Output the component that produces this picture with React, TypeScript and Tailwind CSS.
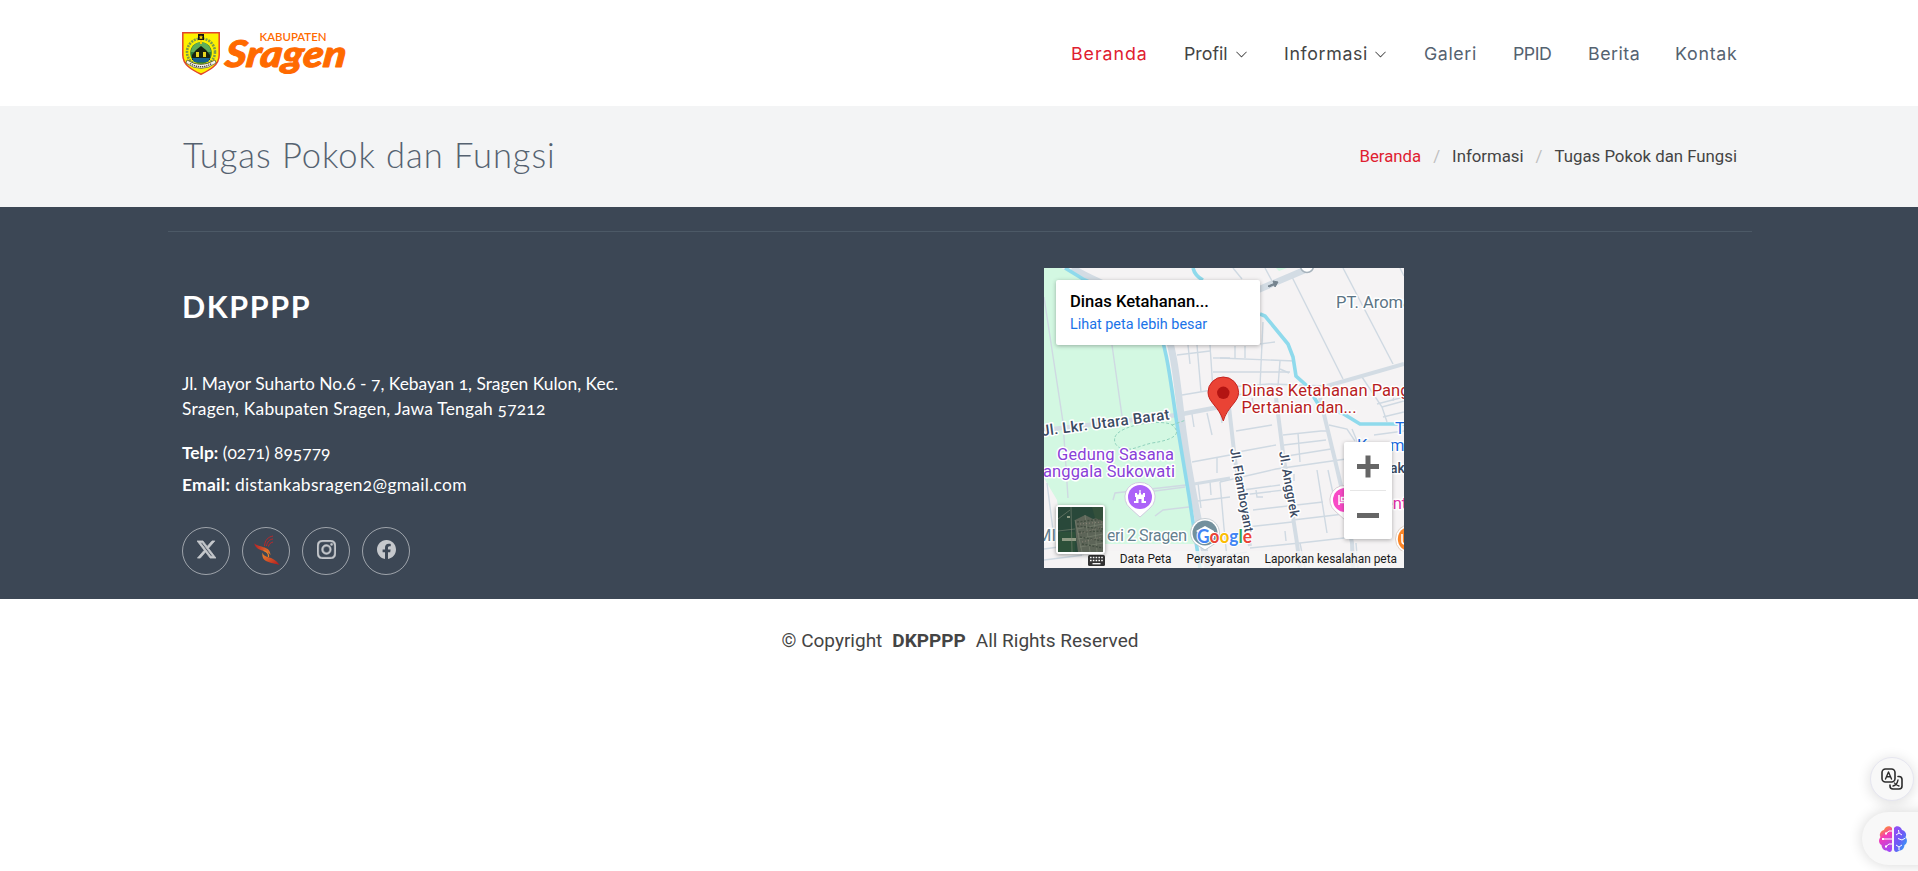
import { BsChevronDown, BsFacebook, BsInstagram, BsTwitterX } from "react-icons/bs";

function Logo() {
  return (
    <svg width="170" height="50" viewBox="0 0 170 50" className="block">
      <path d="M.8 4.8H37.2V27C37.2 37 28 42 19 46.3 10 42 .8 37 .8 27Z" fill="#fdf100" stroke="#e2442b" strokeWidth="1.5" />
      <ellipse cx="19" cy="24" rx="14" ry="13.5" fill="none" stroke="#7c9b4a" strokeWidth="2.6" strokeDasharray="2 1" />
      <circle cx="19" cy="25" r="10.8" fill="#2a7a3c" />
      <path d="M9 24C10 11 28 11 29 24Z" fill="#5fae5a" />
      <path d="M10 27L14 22 19 18 24 22 28 27V32H10Z" fill="#17230f" />
      <path d="M14 24h3v5h-3zM21 24h3v5h-3z" fill="#e6d420" />
      <path d="M10 30H28L26 34H12Z" fill="#14618f" />
      <rect x="16" y="6" width="6" height="6" fill="#151515" />
      <path d="M19 7l.7 1.4 1.5.2-1.1 1 .3 1.6-1.4-.8-1.4.8.3-1.6-1.1-1 1.5-.2zM18 12h2v4h-2z" fill="#fdd000" />
      <path d="M5 32Q19 41 33 32L34 35Q19 46 4 35Z" fill="#f7f7ef" stroke="#34332a" strokeWidth=".6" />
      <path d="M8 35.5Q19 42 30 35.5" fill="none" stroke="#4e4d45" strokeWidth="1.4" strokeDasharray="1.3 .8" />
      <text x="77.500" y="13" fill="#ff6a00" fontFamily="Lato, sans-serif" fontWeight="600" fontSize="11.800" textLength="67" lengthAdjust="spacingAndGlyphs">KABUPATEN</text>
      <text transform="translate(42 39) skewX(-7)" fill="#ff6a00" stroke="#ff6a00" strokeWidth="1" strokeLinejoin="round" fontFamily="Lato, sans-serif" fontStyle="italic" fontWeight="900" fontSize="37" textLength="121" lengthAdjust="spacingAndGlyphs">Sragen</text>
    </svg>
  );
}

const roads = [
  "M216 21L256 4", "M189 0L198 11", "M221 0L228 13", "M248 9L299 111", "M299 0L349 96", "M356 0L360 8",
  "M176 90L251 93", "M169 104H246", "M219 54L216 118", "M191 78V90", "M201 78V90", "M216 76L231 74", "M236 93L234 118",
  "M236 101L245 105", "M318 109L338 139 343 154", "M333 136L360 129", "M339 149L360 144", "M351 121L349 133",
  "M133 87L166 83", "M166 77L169 123", "M153 77L157 124", "M138 127L186 119 225 116 283 118", "M144 77L146 96", "M169 90H186",
  "M148 146L150 159", "M163 145L168 167", "M176 142L178 155", "M148 194L186 187", "M173 190V205", "M154 215L157 240", "M166 213L167 227",
  "M146 234L186 229", "M176 214L232 201 316 189", "M192 163L228 157", "M194 184L232 177", "M199 222L236 217", "M209 242L279 234",
  "M198 227L240 222", "M203 259L248 254", "M249 252L300 246", "M206 280L256 275 300 270", "M239 167L277 163 285 163",
  "M240 177L282 172", "M243 188L287 181", "M254 165L256 194", "M273 202L283 265", "M284 202L290 230", "M250 206V213", "M241 263L242 273",
  "M212 222L213 229 219 229", "M185 128L229 122", "M208 130L210 141",
  "M316 189L345 186", "M308 161L316 180 322 194", "M330 167L360 163", "M285 157L303 161 311 173", "M338 139L360 133",
  "M300 270L326 268", "M312 275L314 300", "M226 300L228 284", "M176 214L180 260 184 300", "M256 275L261 300", "M166 290L203 284",
  "M0 29L19 154 24 230", "M62 40L68 77 78 148", "M0 281L22 278 30 283", "M0 292L40 287", "M3 215L10 270",
  "M69 232L71 225 142 217", "M96 225L141 219", "M111 248L119 242 145 239", "M146 240A5 5 0 0 0 149 244",
];

const halo = {
  stroke: "#fff",
  strokeWidth: 3,
  strokeLinejoin: "round" as const,
  paintOrder: "stroke",
};

function MapCanvas() {
  return (
    <svg width="360" height="300" viewBox="0 0 360 300" className="block" fontFamily="Roboto, sans-serif">
      <rect width="360" height="300" fill="#f5f3f4" />
      <path d="M0 0H17C38 9 86 18 103 40 121 62 128 110 133 142L153 276 20 276 13 232 0 210Z" fill="#d3f8e2" />
      <path d="M232 0H243L235 3Z" fill="#d3f8e2" />
      <g fill="none" stroke="#cfd9e2" strokeWidth="1.4">
        {roads.map((d) => (
          <path key={d} d={d} />
        ))}
      </g>
      <g fill="none" stroke="#d3dce4">
        <path d="M28 0C60 20 105 30 118 52 132 80 134 130 140 170 146 215 155 255 164 300" strokeWidth="7" />
        <path d="M0 162L133 147 186 137" strokeWidth="4.5" />
        <path d="M200 28L216 21 256 4 266 0" strokeWidth="6.5" />
        <path d="M283 118L360 96" strokeWidth="4" />
        <path d="M184 130L191 192 206 278" strokeWidth="4" />
        <path d="M232 130L239 185 253 275 256 300" strokeWidth="4" />
        <path d="M276 130L291 192 298 222 308 275 309 300" strokeWidth="4" />
        <path d="M150 216L186 210" strokeWidth="3" />
      </g>
      <g fill="none" stroke="#8fdaec" strokeWidth="3.6">
        <path d="M21 0L39 11C70 26 100 35 112 55 124 80 127 120 133 156L145 228 156 300" />
        <path d="M216 46L221 48 244 76 249 89 252 108 263 118 276 139 298 145 316 156H360" />
        <path d="M149 0Q151 8 159 12" />
      </g>
      <path d="M71 169C76 156 120 151 128 157 139 166 129 172 108 175 94 178 87 184 76 180Q69 176 71 169ZM128 157L142 152" fill="none" stroke="#90d2bd" strokeDasharray="3 2" />
      <path d="M224 18L230 15.5 229 13 234 14 231 19 230.5 16.8 225 19Z" fill="#75838e" stroke="#75838e" />
      <circle cx="263" cy="-2" r="6.5" fill="#fff" stroke="#a7b3bc" strokeWidth="1.5" />

      <text x="292" y="40" fontSize="16.5" fill="#5b7485" {...halo}>PT. Aroma</text>
      <text x="197.500" y="128" fontSize="16.5" fill="#b81d22" {...halo}><tspan textLength="126">Dinas Ketahanan</tspan> Pangan</text>
      <text x="197.500" y="145" fontSize="16.5" fill="#b81d22" textLength="115" {...halo}>Pertanian dan...</text>
      <text transform="translate(-2 168) rotate(-7.4)" fontSize="15" fontWeight="500" fill="#3b4a62" textLength="129" {...halo}>Jl. Lkr. Utara Barat</text>
      <text transform="translate(186 181) rotate(80)" fontSize="13" fontWeight="500" fill="#3b4a62" textLength="85" {...halo}>Jl. Flamboyant</text>
      <text transform="translate(235 184) rotate(80)" fontSize="13" fontWeight="500" fill="#3b4a62" textLength="67" {...halo}>Jl. Anggrek</text>
      <text x="13" y="192" fontSize="16.5" fill="#8940d8" textLength="117" {...halo}>Gedung Sasana</text>
      <text x="-1" y="209" fontSize="16.5" fill="#8940d8" textLength="132" {...halo}>anggala Sukowati</text>
      <text x="-7" y="273" fontSize="16.5" fill="#647f8e" {...halo}>MI Neg<tspan x="63" textLength="80">eri 2 Sragen</tspan></text>
      <text x="351" y="166" fontSize="16.5" fill="#1a6ae0" {...halo}>T</text>
      <text x="313" y="183" fontSize="16.5" fill="#1a6ae0" {...halo}>K<tspan x="346">me</tspan></text>
      <text x="346" y="205" fontSize="14" fontWeight="500" fill="#3b4a62" {...halo}>aka</text>
      <text x="340" y="241" fontSize="16.5" fill="#e02da8" {...halo}>ent</text>

      <path d="M96 214.500A14.500 14.500 0 0 1 106 240L96 249 86 240A14.500 14.500 0 0 1 96 214.500Z" fill="#fff" stroke="#cabfda" strokeWidth=".8" />
      <circle cx="96" cy="229" r="12" fill="#ac62f8" />
      <path d="M96 222V226" stroke="#fff" strokeWidth="1.300" />
      <path d="M91 225H93V226.500H95V225H97V226.500H99V225H101V229H100V233H102V235H97.500V231H94.500V235H90V233H92V229H91Z" fill="#fff" />

      <path d="M161 250.500A14.500 14.500 0 0 1 171 275.500L161 282 151 275.500A14.500 14.500 0 0 1 161 250.500Z" fill="#fff" stroke="#b9c2c9" strokeWidth=".8" />
      <circle cx="161" cy="265" r="12.500" fill="#73909d" />
      <path d="M152 263L161 258 170 263V270L161 274 155 270V265Z" fill="#fff" />

      <path d="M301 217.500A14.500 14.500 0 0 1 311 243L301 252 291 243A14.500 14.500 0 0 1 301 217.500Z" fill="#fff" stroke="#cfbfc9" strokeWidth=".8" />
      <circle cx="301" cy="232" r="12" fill="#f84ac6" />
      <path d="M295 227V237M295 234.500H307M297.500 229.500H305V232.500H297.500Z" fill="none" stroke="#fff" strokeWidth="1.5" />

      <circle cx="366" cy="271" r="14.500" fill="#fff" stroke="#d5c5b9" strokeWidth=".8" />
      <circle cx="366" cy="271" r="12.200" fill="#fb8527" />
      <path d="M358 266V273Q358 276 361 276" fill="none" stroke="#fff" strokeWidth="1.6" />

      <path d="M179.300 109A15.300 15.300 0 0 1 194.600 124.300C194.600 134.500 183.300 138.500 179.300 153 175.300 138.500 164 134.500 164 124.300A15.300 15.300 0 0 1 179.300 109Z" fill="#ea4335" stroke="#c5221f" strokeWidth="1" />
      <circle cx="179.300" cy="124.800" r="6.200" fill="#b31412" />

      <text x="153" y="274.500" fontSize="18" fontFamily="Lato, sans-serif" fontWeight="700" textLength="55" lengthAdjust="spacingAndGlyphs" {...halo} strokeWidth={2}>
        <tspan fill="#4285f4">G</tspan><tspan fill="#ea4335">o</tspan><tspan fill="#fbbc04">o</tspan><tspan fill="#4285f4">g</tspan><tspan fill="#34a853">l</tspan><tspan fill="#ea4335">e</tspan>
      </text>
    </svg>
  );
}

function Satellite() {
  return (
    <svg width="45" height="45" viewBox="0 0 45 45" className="block">
      <rect width="45" height="45" fill="#29483a" />
      <path d="M17 13L27 8 35 12 45 9V45H20L18 30Z" fill="#5d6558" />
      <path d="M34 0L45 0V14L37 11Z" fill="#34503b" />
      <path d="M0 25H17V45H0Z" fill="#2d5039" />
      <path d="M4 31H18V34H4ZM9 9h3v2H9z" fill="#8f9a83" />
      <path d="M13 0L14 45M0 24L17 22M17 13L24 45M27 8L32 45M36 12L39 45M19 22L45 17M20 32L45 27M0 12L12 3M22 40L45 36" stroke="#7d8676" strokeWidth=".6" fill="none" />
      <path d="M19 15L45 12M19 19L45 22M21 25L45 24M22 30L45 34M24 37L45 41" stroke="#434e41" strokeWidth="1.4" strokeDasharray="2 1.500" fill="none" />
      <path d="M22 17L44 15M20 27L44 20M24 35L44 30" stroke="#8a8376" strokeWidth="1" strokeDasharray="1 2" fill="none" />
    </svg>
  );
}

function MapEmbed() {
  return (
    <div className="relative h-[300px] w-[360px] overflow-hidden font-[Roboto,sans-serif]">
      <MapCanvas />
      <div className="absolute left-3 top-3 h-[65px] w-[204px] rounded-[2px] bg-white pl-[14px] pt-[11px] shadow-[0_1px_4px_rgba(0,0,0,0.3)]">
        <div className="text-[16.6px] font-medium leading-[22px] text-black">Dinas Ketahanan...</div>
        <div className="pt-px text-[14.4px] leading-[21px] text-[#1a73e8]">Lihat peta lebih besar</div>
      </div>
      <div className="absolute bottom-0 right-0 flex h-[17px] w-[322px] items-center justify-end gap-[15px] bg-[#f5f5f5]/75 pr-[7px] pt-px text-[11.9px] text-[#1c1c1c]">
        <svg width="17" height="11" viewBox="0 0 17 11">
          <rect width="17" height="11" rx="1.500" fill="#333" />
          <path d="M2 2.500H15M2 5.500H15" stroke="#fff" strokeWidth="1.500" strokeDasharray="1.600 1.200" />
          <path d="M4.500 8.700H12.500" stroke="#fff" strokeWidth="1.300" />
        </svg>
        <span>Data Peta</span>
        <span>Persyaratan</span>
        <span>Laporkan kesalahan peta</span>
      </div>
      <div className="absolute left-[12px] top-[237px] rounded-[3px] border-2 border-white bg-white shadow-[0_1px_4px_rgba(0,0,0,0.4)]">
        <Satellite />
      </div>
      <div className="absolute left-[300px] top-[174px] flex h-[97px] w-[48px] flex-col items-center rounded-[2px] bg-white shadow-[0_1px_4px_rgba(0,0,0,0.3)]">
        <svg width="48" height="48" viewBox="0 0 48 48"><path d="M13 24.500H35M24 13.500V35.500" stroke="#666" strokeWidth="5" /></svg>
        <div className="h-px w-9 bg-[#e6e6e6]" />
        <svg width="48" height="48" viewBox="0 0 48 48"><path d="M13 24.500H35" stroke="#666" strokeWidth="5" /></svg>
      </div>
    </div>
  );
}

function Bird() {
  return (
    <svg width="27" height="30" viewBox="0 0 27 30">
      <defs>
        <linearGradient id="wing" x1="0" y1="0" x2="1" y2="0">
          <stop offset="0" stopColor="#b51f26" />
          <stop offset="1" stopColor="#e8792b" />
        </linearGradient>
        <linearGradient id="tail" x1="0" y1="0" x2="1" y2="1">
          <stop offset="0" stopColor="#ee8a2d" />
          <stop offset="1" stopColor="#b3161f" />
        </linearGradient>
      </defs>
      <path d="M1 8C5 13 17 10 17.500 20 14 14 4 18 1 8Z" fill="url(#wing)" />
      <path d="M9.500 17.500C11 24 20 20 26.500 30 18 27 8 28 9.500 17.500Z" fill="url(#tail)" />
      <path d="M10.500 15.500Q16 17 15.500 22" fill="none" stroke="#e8842c" strokeWidth="1.200" />
      <path d="M11.500 11C12 5 15 2 20 1M13.500 11C14 7 17 4 20 4M15.500 11.500C16 9 17 8 20 7" stroke="#b9282c" strokeWidth="1" fill="none" />
    </svg>
  );
}

function Brain() {
  return (
    <svg width="30" height="28" viewBox="0 0 30 28">
      <defs>
        <linearGradient id="brainL" x1=".3" y1="0" x2=".6" y2="1">
          <stop offset="0" stopColor="#ff9a1f" />
          <stop offset=".4" stopColor="#f43bb8" />
          <stop offset="1" stopColor="#a347f5" />
        </linearGradient>
        <linearGradient id="brainR" x1="0" y1="0" x2="1" y2="1">
          <stop offset="0" stopColor="#9a4af5" />
          <stop offset=".5" stopColor="#6b5cf6" />
          <stop offset="1" stopColor="#1fb2f5" />
        </linearGradient>
      </defs>
      <path d="M14 3C12 0 7 1 6 5 2 6 1 10 2.500 12 0 15 1 19 3.500 20 4 25 8 26 9 25.500 11 28 14 27 14 24Z" fill="url(#brainL)" />
      <path d="M16 3C18 0 23 1 24 5 28 6 29 10 27.500 12 30 15 29 19 26.500 20 26 25 22 26 21 25.500 19 28 16 27 16 24Z" fill="url(#brainR)" />
      <path d="M14 6H11L8 8.500M5 14H14M14 19H11L8 21.500M18 10L21 8 20.500 5M21 8L24 10M20 13.500L24 15 27.500 13M18 20L21 22 24 20M21 22V25" fill="none" stroke="#fff" strokeWidth="1" />
      <path d="M7 8.500h2M4 14h2M7 21.500h2" stroke="#fff" strokeWidth="1.800" />
    </svg>
  );
}

function Translate() {
  return (
    <svg width="22" height="22" viewBox="0 0 22 22" fill="none" stroke="#2c2c2c" strokeWidth="1.600" strokeLinecap="round" strokeLinejoin="round">
      <rect x="1" y="1" width="13" height="13" rx="3.500" />
      <path d="M4.500 11L7.500 4 10.500 11M5.600 8.800H9.400" strokeWidth="1.400" />
      <path d="M17 8.500H18Q21 8.500 21 11.500V18Q21 21 18 21H12Q9 21 9 18V17" />
      <path d="M17 12Q16 17 12 18M13.500 15Q15 17.500 18 18" strokeWidth="1.300" />
    </svg>
  );
}

const social = "flex size-12 items-center justify-center rounded-full border border-white/50 pb-[3px] text-[#c5c8cc]";

export default function App() {
  return (
    <div className="relative h-[871px] w-full overflow-hidden bg-white font-[Roboto,sans-serif] text-[#444]">
      <div className="w-[1920px]">
        <header className="h-[106px]">
          <div className="mx-auto flex h-full w-[1556px] items-center justify-between">
            <div>
              <Logo />
            </div>
            <nav className="flex h-[54px] items-center whitespace-nowrap pt-[2px] font-[Inter,sans-serif] text-[17.8px] text-[#556270]">
              <a className="w-[113px] tracking-[0.95px] text-[#df2030]">Beranda</a>
              <a className="flex w-[100px] items-center gap-[7px] text-[#444]">Profil<BsChevronDown size={13} /></a>
              <a className="flex w-[140px] items-center gap-[6px] tracking-[0.65px] text-[#444]">Informasi<BsChevronDown size={13} /></a>
              <a className="w-[89px] tracking-[0.6px]">Galeri</a>
              <a className="w-[75px] tracking-[-0.5px]">PPID</a>
              <a className="w-[87px] tracking-[0.5px]">Berita</a>
              <a className="w-[63px] tracking-[0.75px]">Kontak</a>
            </nav>
          </div>
        </header>

        <section className="h-[101px] bg-[#f3f4f5]">
          <div className="mx-auto flex h-full w-[1554px] items-center justify-between">
            <h1 className="pb-[4px] font-[Lato,sans-serif] text-[34.5px] font-light tracking-[0.95px] text-[#556270]">Tugas Pokok dan Fungsi</h1>
            <ol className="flex text-[16.8px]">
              <li className="text-[#df2030]">Beranda</li>
              <li className="px-3 text-[#bfbfbf]">/</li>
              <li>Informasi</li>
              <li className="px-3 text-[#bfbfbf]">/</li>
              <li>Tugas Pokok dan Fungsi</li>
            </ol>
          </div>
        </section>

        <footer className="h-[392px] bg-[#3c4755] pt-6">
          <div className="mx-auto flex w-[1584px] border-t border-[#4c5966] pl-[14px] pt-9">
            <div className="w-[862px] font-[Lato,sans-serif] text-[17.4px] text-white">
              <h2 className="pt-5 text-[30.5px] font-bold leading-[36px] tracking-[1.6px]">DKPPPP</h2>
              <p className="pt-[47px] leading-[25px] oldstyle-nums">
                Jl. Mayor Suharto No.6 - 7, Kebayan 1, Sragen Kulon, Kec.
                <br />
                <span className="tracking-[0.2px]">Sragen, Kabupaten Sragen, Jawa Tengah 57212</span>
              </p>
              <p className="pt-[19px] leading-[25px] oldstyle-nums"><strong>Telp:</strong> (0271) 895779</p>
              <p className="pt-[7px] leading-[25px] tracking-[0.3px] oldstyle-nums"><strong>Email:</strong> distankabsragen2@gmail.com</p>
              <div className="flex gap-3 pt-[30px]">
                <a className={social}><BsTwitterX size={19} stroke="currentColor" strokeWidth="0.6" /></a>
                <a className={social}><Bird /></a>
                <a className={social}><BsInstagram size={19} stroke="currentColor" strokeWidth="0.4" /></a>
                <a className={social}><BsFacebook size={19} /></a>
              </div>
            </div>
            <MapEmbed />
          </div>
        </footer>

        <p className="flex justify-center gap-[10px] pt-[28px] text-[19px] leading-[27px]">
          <span>© Copyright</span>
          <strong>DKPPPP</strong>
          <span>All Rights Reserved</span>
        </p>
      </div>

      <div className="absolute left-[1870px] top-[757px] flex size-[44px] items-center justify-center rounded-full border border-[#e6e6f0] bg-[#f8f8f8] shadow-[0_2px_14px_rgba(0,0,0,0.14)]">
        <Translate />
      </div>
      <div className="absolute left-[1862px] top-[812px] flex h-[53px] w-[70px] items-center rounded-l-full bg-[#f8f8f8] pl-[16px] shadow-[0_0_14px_rgba(0,0,0,0.16)]">
        <Brain />
      </div>
    </div>
  );
}
